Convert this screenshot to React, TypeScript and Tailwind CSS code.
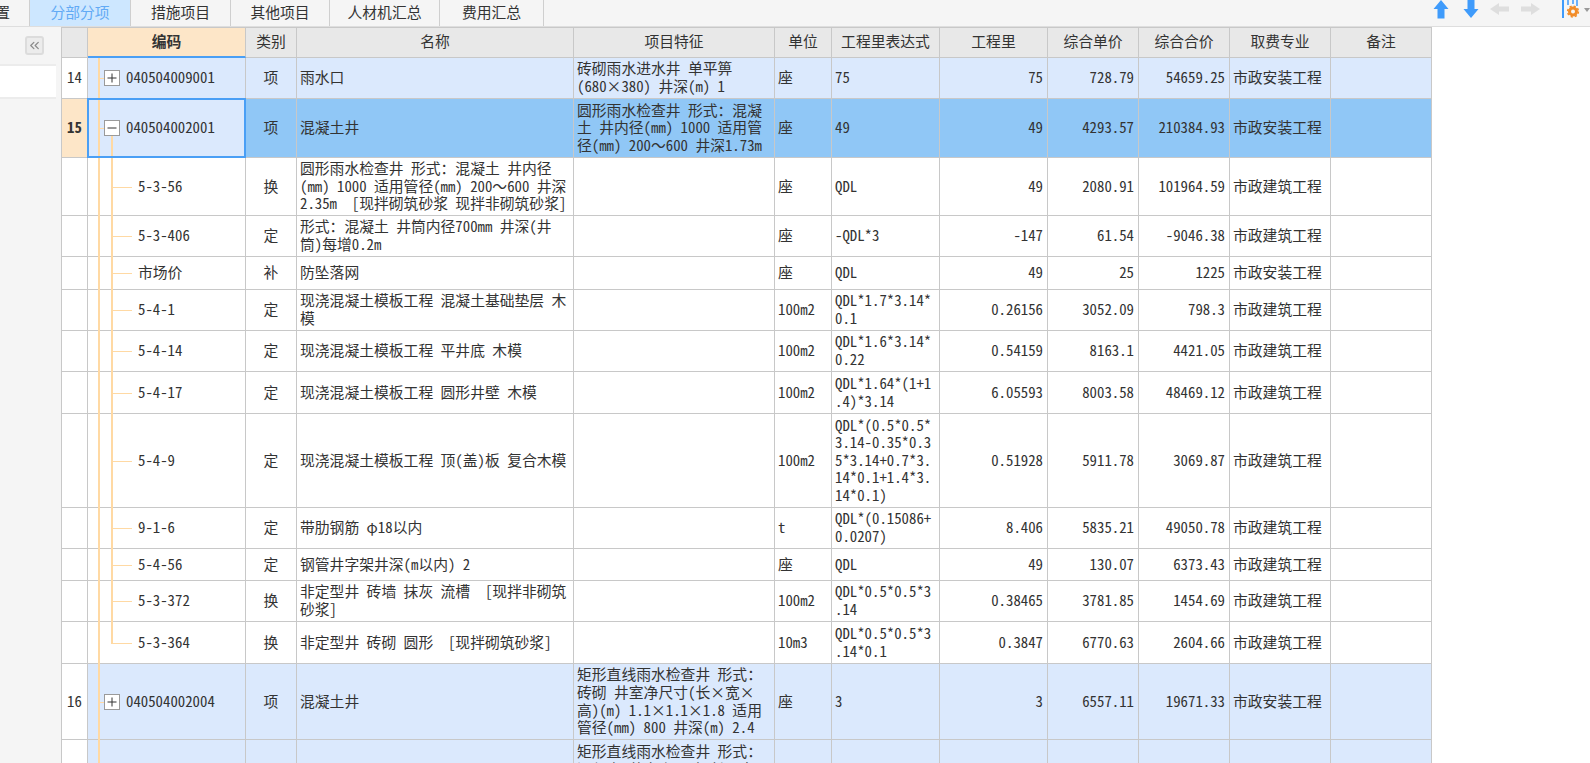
import React from "react";
import { ChevronsLeft } from "lucide-react";

type Row = {
  no?: string;
  kind: "parent" | "open" | "child" | "last" | "clip";
  code: string;
  type: string;
  name: string;
  feature?: string;
  unit: string;
  expr: string;
  qty: string;
  price: string;
  total: string;
  fee: string;
  h: string;
};

const rows: Row[] = [
  { no: "14", kind: "parent", code: "040504009001", type: "项", name: "雨水口", feature: "砖砌雨水进水井 单平箅\n(680×380) 井深(m) 1", unit: "座", expr: "75", qty: "75", price: "728.79", total: "54659.25", fee: "市政安装工程", h: "h-[41px]" },
  { no: "15", kind: "open", code: "040504002001", type: "项", name: "混凝土井", feature: "圆形雨水检查井 形式：混凝\n土 井内径(mm) 1000 适用管\n径(mm) 200～600 井深1.73m", unit: "座", expr: "49", qty: "49", price: "4293.57", total: "210384.93", fee: "市政安装工程", h: "h-[59px]" },
  { kind: "child", code: "5-3-56", type: "换", name: "圆形雨水检查井 形式：混凝土 井内径\n(mm) 1000 适用管径(mm) 200～600 井深\n2.35m  [现拌砌筑砂浆 现拌非砌筑砂浆]", unit: "座", expr: "QDL", qty: "49", price: "2080.91", total: "101964.59", fee: "市政建筑工程", h: "h-[58px]" },
  { kind: "child", code: "5-3-406", type: "定", name: "形式：混凝土 井筒内径700mm 井深(井\n筒)每增0.2m", unit: "座", expr: "-QDL*3", qty: "-147", price: "61.54", total: "-9046.38", fee: "市政建筑工程", h: "h-[41px]" },
  { kind: "child", code: "市场价", type: "补", name: "防坠落网", unit: "座", expr: "QDL", qty: "49", price: "25", total: "1225", fee: "市政安装工程", h: "h-[33px]" },
  { kind: "child", code: "5-4-1", type: "定", name: "现浇混凝土模板工程 混凝土基础垫层 木\n模", unit: "100m2", expr: "QDL*1.7*3.14*\n0.1", qty: "0.26156", price: "3052.09", total: "798.3", fee: "市政建筑工程", h: "h-[41px]" },
  { kind: "child", code: "5-4-14", type: "定", name: "现浇混凝土模板工程 平井底 木模", unit: "100m2", expr: "QDL*1.6*3.14*\n0.22", qty: "0.54159", price: "8163.1", total: "4421.05", fee: "市政建筑工程", h: "h-[41px]" },
  { kind: "child", code: "5-4-17", type: "定", name: "现浇混凝土模板工程 圆形井壁 木模", unit: "100m2", expr: "QDL*1.64*(1+1\n.4)*3.14", qty: "6.05593", price: "8003.58", total: "48469.12", fee: "市政建筑工程", h: "h-[42px]" },
  { kind: "child", code: "5-4-9", type: "定", name: "现浇混凝土模板工程 顶(盖)板 复合木模", unit: "100m2", expr: "QDL*(0.5*0.5*\n3.14-0.35*0.3\n5*3.14+0.7*3.\n14*0.1+1.4*3.\n14*0.1)", qty: "0.51928", price: "5911.78", total: "3069.87", fee: "市政建筑工程", h: "h-[94px]" },
  { kind: "child", code: "9-1-6", type: "定", name: "带肋钢筋 φ18以内", unit: "t", expr: "QDL*(0.15086+\n0.0207)", qty: "8.406", price: "5835.21", total: "49050.78", fee: "市政建筑工程", h: "h-[41px]" },
  { kind: "child", code: "5-4-56", type: "定", name: "钢管井字架井深(m以内) 2", unit: "座", expr: "QDL", qty: "49", price: "130.07", total: "6373.43", fee: "市政建筑工程", h: "h-[32px]" },
  { kind: "child", code: "5-3-372", type: "换", name: "非定型井 砖墙 抹灰 流槽  [现拌非砌筑\n砂浆]", unit: "100m2", expr: "QDL*0.5*0.5*3\n.14", qty: "0.38465", price: "3781.85", total: "1454.69", fee: "市政建筑工程", h: "h-[41px]" },
  { kind: "last", code: "5-3-364", type: "换", name: "非定型井 砖砌 圆形  [现拌砌筑砂浆]", unit: "10m3", expr: "QDL*0.5*0.5*3\n.14*0.1", qty: "0.3847", price: "6770.63", total: "2604.66", fee: "市政建筑工程", h: "h-[42px]" },
  { no: "16", kind: "parent", code: "040504002004", type: "项", name: "混凝土井", feature: "矩形直线雨水检查井 形式：\n砖砌 井室净尺寸(长×宽×\n高)(m) 1.1×1.1×1.8 适用\n管径(mm) 800 井深(m) 2.4", unit: "座", expr: "3", qty: "3", price: "6557.11", total: "19671.33", fee: "市政安装工程", h: "h-[76px]" },
  { kind: "clip", code: "", type: "", name: "", feature: "矩形直线雨水检查井 形式：\n混凝土 井室净尺寸(长×宽×\n高)(m) 1.1×1.1×1.8 适用\n管径(mm) 800 井深(m) 2.4", unit: "", expr: "", qty: "", price: "", total: "", fee: "", h: "h-[76px]" },
];

const gridCols = "grid grid-cols-[26px_158px_51px_277px_201px_57px_108px_108px_91px_91px_101px_101px]";
const cellBase = "relative flex items-center border-r border-b border-[#c8c8c8] whitespace-pre leading-[17.6px] pb-[2px]";

const headers = ["", "编码", "类别", "名称", "项目特征", "单位", "工程里表达式", "工程里", "综合单价", "综合合价", "取费专业", "备注"];

function TreeBox({ open }: { open: boolean }) {
  return (
    <span className="absolute left-[16px] top-1/2 -mt-[8px] z-10 flex h-[16px] w-[16px] items-center justify-center border border-[#9a9a9a] bg-white">
      <svg width="10" height="10" viewBox="0 0 10 10">
        <path d={open ? "M0.500 5H9.500" : "M0.500 5H9.500M5 0.500V9.500"} stroke="#333" strokeWidth="1" />
      </svg>
    </span>
  );
}

function CodeCell({ row, bg }: { row: Row; bg: string }) {
  const isChild = row.kind === "child" || row.kind === "last";
  const hasBox = row.kind === "parent" || row.kind === "open";
  return (
    <div className={`${cellBase} ${bg} text-[14.8px]`}>
      <span className="absolute left-[10px] top-0 -bottom-px w-[2px] bg-[#ffd9a3]" />
      {hasBox && <span className="absolute left-[10px] top-1/2 h-px w-[6px] bg-[#ffd9a3]" />}
      {row.kind === "open" && <span className="absolute left-[23px] top-1/2 -bottom-px w-[2px] bg-[#ffd9a3]" />}
      {row.kind === "child" && <span className="absolute left-[23px] top-0 -bottom-px w-[2px] bg-[#ffd9a3]" />}
      {row.kind === "last" && <span className="absolute left-[23px] top-0 bottom-1/2 w-[2px] bg-[#ffd9a3]" />}
      {isChild && <span className="absolute left-[23px] top-1/2 h-px w-[21px] bg-[#ffd9a3]" />}
      {hasBox && <TreeBox open={row.kind === "open"} />}
      <span className={isChild ? "pl-[50px]" : "pl-[38px]"}>{row.code}</span>
      {row.kind === "open" && <span className="pointer-events-none absolute -inset-x-px -top-px -bottom-px z-20 border-2 border-[#4a9ff5]" />}
    </div>
  );
}

function TableRow({ row }: { row: Row }) {
  const bg = row.kind === "open" ? "bg-[#90c7f6]" : row.kind === "parent" || row.kind === "clip" ? "bg-[#dbe9fd]" : "bg-white";
  const codeBg = row.kind === "open" ? "bg-[#dbe9fd]" : bg;
  return (
    <div className={`${gridCols} ${row.h}`}>
      <div className={`${cellBase} justify-center text-[14.8px] ${row.kind === "open" ? "bg-[#fde6c8] font-bold" : "bg-white"}`}>{row.no}</div>
      <CodeCell row={row} bg={codeBg} />
      <div className={`${cellBase} ${bg} justify-center text-[14.8px]`}>{row.type}</div>
      <div className={`${cellBase} ${bg} pl-[3px] text-[14.8px]`}>{row.name}</div>
      <div className={`${cellBase} ${bg} pl-[3px] text-[14.8px] ${row.kind === "clip" ? "items-start pt-[2px]" : ""}`}>{row.feature}</div>
      <div className={`${cellBase} ${bg} pl-[3px] text-[14.8px]`}>{row.unit}</div>
      <div className={`${cellBase} ${bg} pl-[3px] text-[14.8px]`}>{row.expr}</div>
      <div className={`${cellBase} ${bg} justify-end pr-[4px] text-[14.8px]`}>{row.qty}</div>
      <div className={`${cellBase} ${bg} justify-end pr-[4px] text-[14.8px]`}>{row.price}</div>
      <div className={`${cellBase} ${bg} justify-end pr-[4px] text-[14.8px]`}>{row.total}</div>
      <div className={`${cellBase} ${bg} pl-[3px] text-[14.8px]`}>{row.fee}</div>
      <div className={`${cellBase} ${bg}`} />
    </div>
  );
}

function ArrowIcons() {
  return (
    <div className="ml-auto flex h-[26px] items-start">
      <svg width="18" height="20" viewBox="0 0 18 20">
        <path d="M8 0L15.500 9H11.500V18.500H4.500V9H0.500Z" fill="#3f9bfb" />
      </svg>
      <svg width="18" height="20" viewBox="0 0 18 20" className="ml-[12px]">
        <path d="M4.500 0H11.500V9H15.500L8 18L0.500 9H4.500Z" fill="#3f9bfb" />
      </svg>
      <svg width="20" height="20" viewBox="0 0 20 20" className="ml-[9px]">
        <path d="M0 9L9 3V6.500H19V11.500H9V15Z" fill="#dedede" />
      </svg>
      <svg width="20" height="20" viewBox="0 0 20 20" className="ml-[11px]">
        <path d="M19 9L10 3V6.500H0V11.500H10V15Z" fill="#dedede" />
      </svg>
      <svg width="28" height="20" viewBox="0 0 28 20" className="ml-[21px]">
        <path d="M1 0V18" stroke="#3f9bfb" strokeWidth="2" />
        <path d="M6 0V5M11 0V4M15 0V6" stroke="#3f9bfb" strokeWidth="1.500" />
        <circle cx="11" cy="11.500" r="3.500" fill="none" stroke="#f28c28" strokeWidth="3" />
        <circle cx="11" cy="11.500" r="5.400" fill="none" stroke="#f28c28" strokeWidth="1.500" strokeDasharray="2.200 2.040" />
        <path d="M22 8H28L25 12Z" fill="#999" />
      </svg>
    </div>
  );
}

export default function App() {
  const tabs = ["分部分项", "措施项目", "其他项目", "人材机汇总", "费用汇总"];
  const tabWidths = ["w-[101px]", "w-[100px]", "w-[99px]", "w-[110px]", "w-[104px]"];
  const font = "font-['Noto_Sans_Mono_CJK_SC','Noto_Sans_CJK_SC',monospace]";
  return (
    <div className={`flex h-[763px] w-[1590px] flex-col overflow-hidden bg-white text-[#333] ${font}`}>
      <div className="flex h-[27px] shrink-0 border-b border-[#dedede] bg-[#f5f5f5]">
        <div className="flex h-[26px] w-[30px] items-center justify-end overflow-hidden border-r border-[#cfcfcf] pb-[2px] pr-[19px] text-[14.8px]">
          <span className="shrink-0">置</span>
        </div>
        {tabs.map((t, i) => (
          <div
            key={t}
            className={`flex h-[26px] items-center justify-center border-r border-[#cfcfcf] pb-[2px] text-[14.8px] ${tabWidths[i]} ${i === 0 ? "bg-[#cde7ff] text-[#62aaf5]" : ""}`}
          >
            {t}
          </div>
        ))}
        <ArrowIcons />
      </div>
      <div className="flex min-h-0 flex-1">
        <div className="w-[61px] shrink-0 bg-[#f5f5f5] pt-[9px]">
          <div className="ml-[25px] flex h-[19px] w-[19px] items-center justify-center rounded-[3px] border-2 border-[#dcdcdc] bg-[#ececec] text-[#8a8a8a]">
            <ChevronsLeft size={15} strokeWidth={2} />
          </div>
          <div className="mt-[9px] h-[35px] w-[56px] border-y-2 border-[#ececec] bg-white" />
        </div>
        <div className="h-[760px] w-[1371px] shrink-0 border-l border-[#c8c8c8]">
          <div className={`${gridCols} h-[31px] text-[14.8px]`}>
            {headers.map((h, i) => (
              <div
                key={i}
                className={`flex items-center justify-center border-t border-r border-b border-[#c8c8c8] pb-[2px] ${
                  i === 1 ? "border-b-2 border-b-[#4a9ff5] bg-[#fde6c8] font-bold" : "bg-[#e8e8e8]"
                }`}
              >
                {h}
              </div>
            ))}
          </div>
          {rows.map((r, i) => (
            <TableRow key={i} row={r} />
          ))}
        </div>
      </div>
    </div>
  );
}
